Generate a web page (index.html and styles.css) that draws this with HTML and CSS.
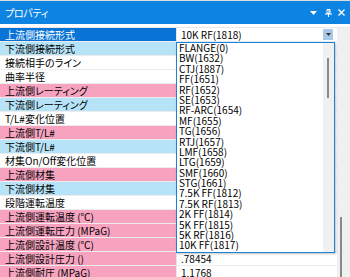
FILE: index.html
```html
<!DOCTYPE html>
<html lang="ja">
<head>
  <meta charset="UTF-8">
  <meta name="viewport" content="width=device-width, initial-scale=1.0">
  <title>プロパティ</title>
  <link rel="stylesheet" href="styles.css">
</head>
<body>
  <div class="panel">
    <div class="panel__title">
      <span class="panel__title-text">プロパティ</span>
      <div class="panel__tools">
        <svg class="tool tool--menu" width="7" height="4" viewBox="0 0 7 4"><path d="M0 0h7L3.5 4z" fill="#fff"/></svg>
        <svg class="tool tool--pin" width="7" height="8" viewBox="0 0 7 8"><path d="M2 .5h3v4H2z" fill="none" stroke="#fff"/><path d="M4 1v3.5" stroke="#fff"/><path d="M0 5h7M3.5 5v3" stroke="#fff"/></svg>
        <svg class="tool tool--close" width="7" height="7" viewBox="0 0 7 7"><path d="M.5 .5l6 6M6.5 .5l-6 6" stroke="#fff" stroke-width="1.4"/></svg>
      </div>
    </div>

    <div class="grid">
      <div class="grid__rows">
        <div class="row row--selected">
          <div class="row__label">上流側接続形式</div>
          <div class="row__value">
            <span>10K RF(1818)</span>
            <span class="dd-btn"><svg width="5" height="3" viewBox="0 0 5 3"><path d="M0 0h5L2.5 3z" fill="#333"/></svg></span>
          </div>
        </div>
        <div class="row row--down"><div class="row__label">下流側接続形式</div><div class="row__value"></div></div>
        <div class="row"><div class="row__label">接続相手のライン</div><div class="row__value"></div></div>
        <div class="row"><div class="row__label">曲率半径</div><div class="row__value"></div></div>
        <div class="row row--up"><div class="row__label">上流側レーティング</div><div class="row__value"></div></div>
        <div class="row row--down"><div class="row__label">下流側レーティング</div><div class="row__value"></div></div>
        <div class="row"><div class="row__label">T/L#変化位置</div><div class="row__value"></div></div>
        <div class="row row--up"><div class="row__label">上流側T/L#</div><div class="row__value"></div></div>
        <div class="row row--down"><div class="row__label">下流側T/L#</div><div class="row__value"></div></div>
        <div class="row"><div class="row__label">材集On/Off変化位置</div><div class="row__value"></div></div>
        <div class="row row--up"><div class="row__label">上流側材集</div><div class="row__value"></div></div>
        <div class="row row--down"><div class="row__label">下流側材集</div><div class="row__value"></div></div>
        <div class="row"><div class="row__label">段階運転温度</div><div class="row__value"></div></div>
        <div class="row row--up"><div class="row__label">上流側運転温度 (℃)</div><div class="row__value"></div></div>
        <div class="row row--up"><div class="row__label">上流側運転圧力 (MPaG)</div><div class="row__value"></div></div>
        <div class="row row--up"><div class="row__label">上流側設計温度 (℃)</div><div class="row__value"></div></div>
        <div class="row row--up"><div class="row__label">上流側設計圧力 ()</div><div class="row__value">.78454</div></div>
        <div class="row row--up"><div class="row__label">上流側耐圧 (MPaG)</div><div class="row__value">1.1768</div></div>
      </div>
      <div class="grid__scroll"><span class="grid__thumb"></span></div>
    </div>

    <!-- open dropdown of the selected value -->
    <div class="dropdown">
      <div class="dropdown__list">
        <div class="dropdown__item">FLANGE(0)</div>
        <div class="dropdown__item">BW(1632)</div>
        <div class="dropdown__item">CTJ(1887)</div>
        <div class="dropdown__item">FF(1651)</div>
        <div class="dropdown__item">RF(1652)</div>
        <div class="dropdown__item">SE(1653)</div>
        <div class="dropdown__item">RF-ARC(1654)</div>
        <div class="dropdown__item">MF(1655)</div>
        <div class="dropdown__item">TG(1656)</div>
        <div class="dropdown__item">RTJ(1657)</div>
        <div class="dropdown__item">LMF(1658)</div>
        <div class="dropdown__item">LTG(1659)</div>
        <div class="dropdown__item">SMF(1660)</div>
        <div class="dropdown__item">STG(1661)</div>
        <div class="dropdown__item">7.5K FF(1812)</div>
        <div class="dropdown__item">7.5K RF(1813)</div>
        <div class="dropdown__item">2K FF(1814)</div>
        <div class="dropdown__item">5K FF(1815)</div>
        <div class="dropdown__item">5K RF(1816)</div>
        <div class="dropdown__item">10K FF(1817)</div>
      </div>
      <div class="dropdown__bar"><span class="dropdown__thumb"></span></div>
    </div>
  </div>
</body>
</html>
```

FILE: styles.css
```css
* {
  box-sizing: border-box;
}
body {
  margin: 0;
  background: #fff;
  color: #000;
  font-family: "Noto Sans CJK JP", "Noto Sans", sans-serif;
  font-size: 10px;
}

/* パネル */
.panel {
  width: 350px;
  height: 277px;
  position: relative;
  overflow: hidden;
  border-top: 1px solid #dcdcdc;
}
.panel__title {
  height: 23px;
  background: #0e84e2;
  color: #fff;
  display: flex;
  align-items: center;
  justify-content: space-between;
  padding: 0 5px 0 5px;
}
.panel__title-text {
  font-size: 10px;
  font-feature-settings: "palt";
  letter-spacing: -0.3px;
}
.panel__tools {
  display: flex;
  align-items: center;
}
.tool--menu {
  margin-top: 1px;
  margin-right: 8px;
}
.tool--pin {
  margin-right: 6px;
}

/* グリッド */
.grid {
  margin-top: 3px;
  border-top: 1px solid #e8e8e8;
  display: flex;
}
.grid__rows {
  width: 337px;
}
.row {
  display: flex;
  height: 14px;
  border-bottom: 1px solid #ececec;
  background: #fff;
}
.row__label {
  width: 177px;
  padding-left: 5px;
  line-height: 13px;
  white-space: nowrap;
  font-feature-settings: "palt";
  border-right: 1px solid #e6e6e6;
}
.row__value {
  flex: 1;
  display: flex;
  align-items: center;
  justify-content: space-between;
  padding-left: 4px;
  line-height: 13px;
  background: #fff;
}
.row--up .row__label {
  background: #f7a3c0;
}
.row--down .row__label {
  background: #b6e3f7;
}
.row--selected .row__label {
  background: #0a74d6;
  color: #fff;
}
.dd-btn {
  width: 10px;
  height: 11px;
  margin-right: 4px;
  background: #a9c7e6;
  display: flex;
  align-items: center;
  justify-content: center;
}
.grid__scroll {
  width: 13px;
  height: 249px;
  background: #f0f0f0;
}
.grid__thumb {
  display: block;
  width: 2px;
  height: 70px;
  margin: 189px 0 0 3px;
  background: #8a8a8a;
}

/* ドロップダウン */
.dropdown {
  position: absolute;
  left: 176px;
  top: 41px;
  width: 159px;
  height: 211px;
  border: 1px solid #1883d7;
  background: #fff;
  box-shadow: 1px 1px 2px rgba(0, 0, 0, 0.25);
  display: flex;
}
.dropdown__list {
  flex: 1;
  padding-left: 2px;
}
.dropdown__item {
  height: 10.4px;
  line-height: 10.4px;
  white-space: nowrap;
}
.dropdown__bar {
  width: 11px;
  background: #f0f0f0;
}
.dropdown__thumb {
  display: block;
  width: 2px;
  height: 40px;
  margin: 15px 0 0 4px;
  background: #8a8a8a;
}
```
